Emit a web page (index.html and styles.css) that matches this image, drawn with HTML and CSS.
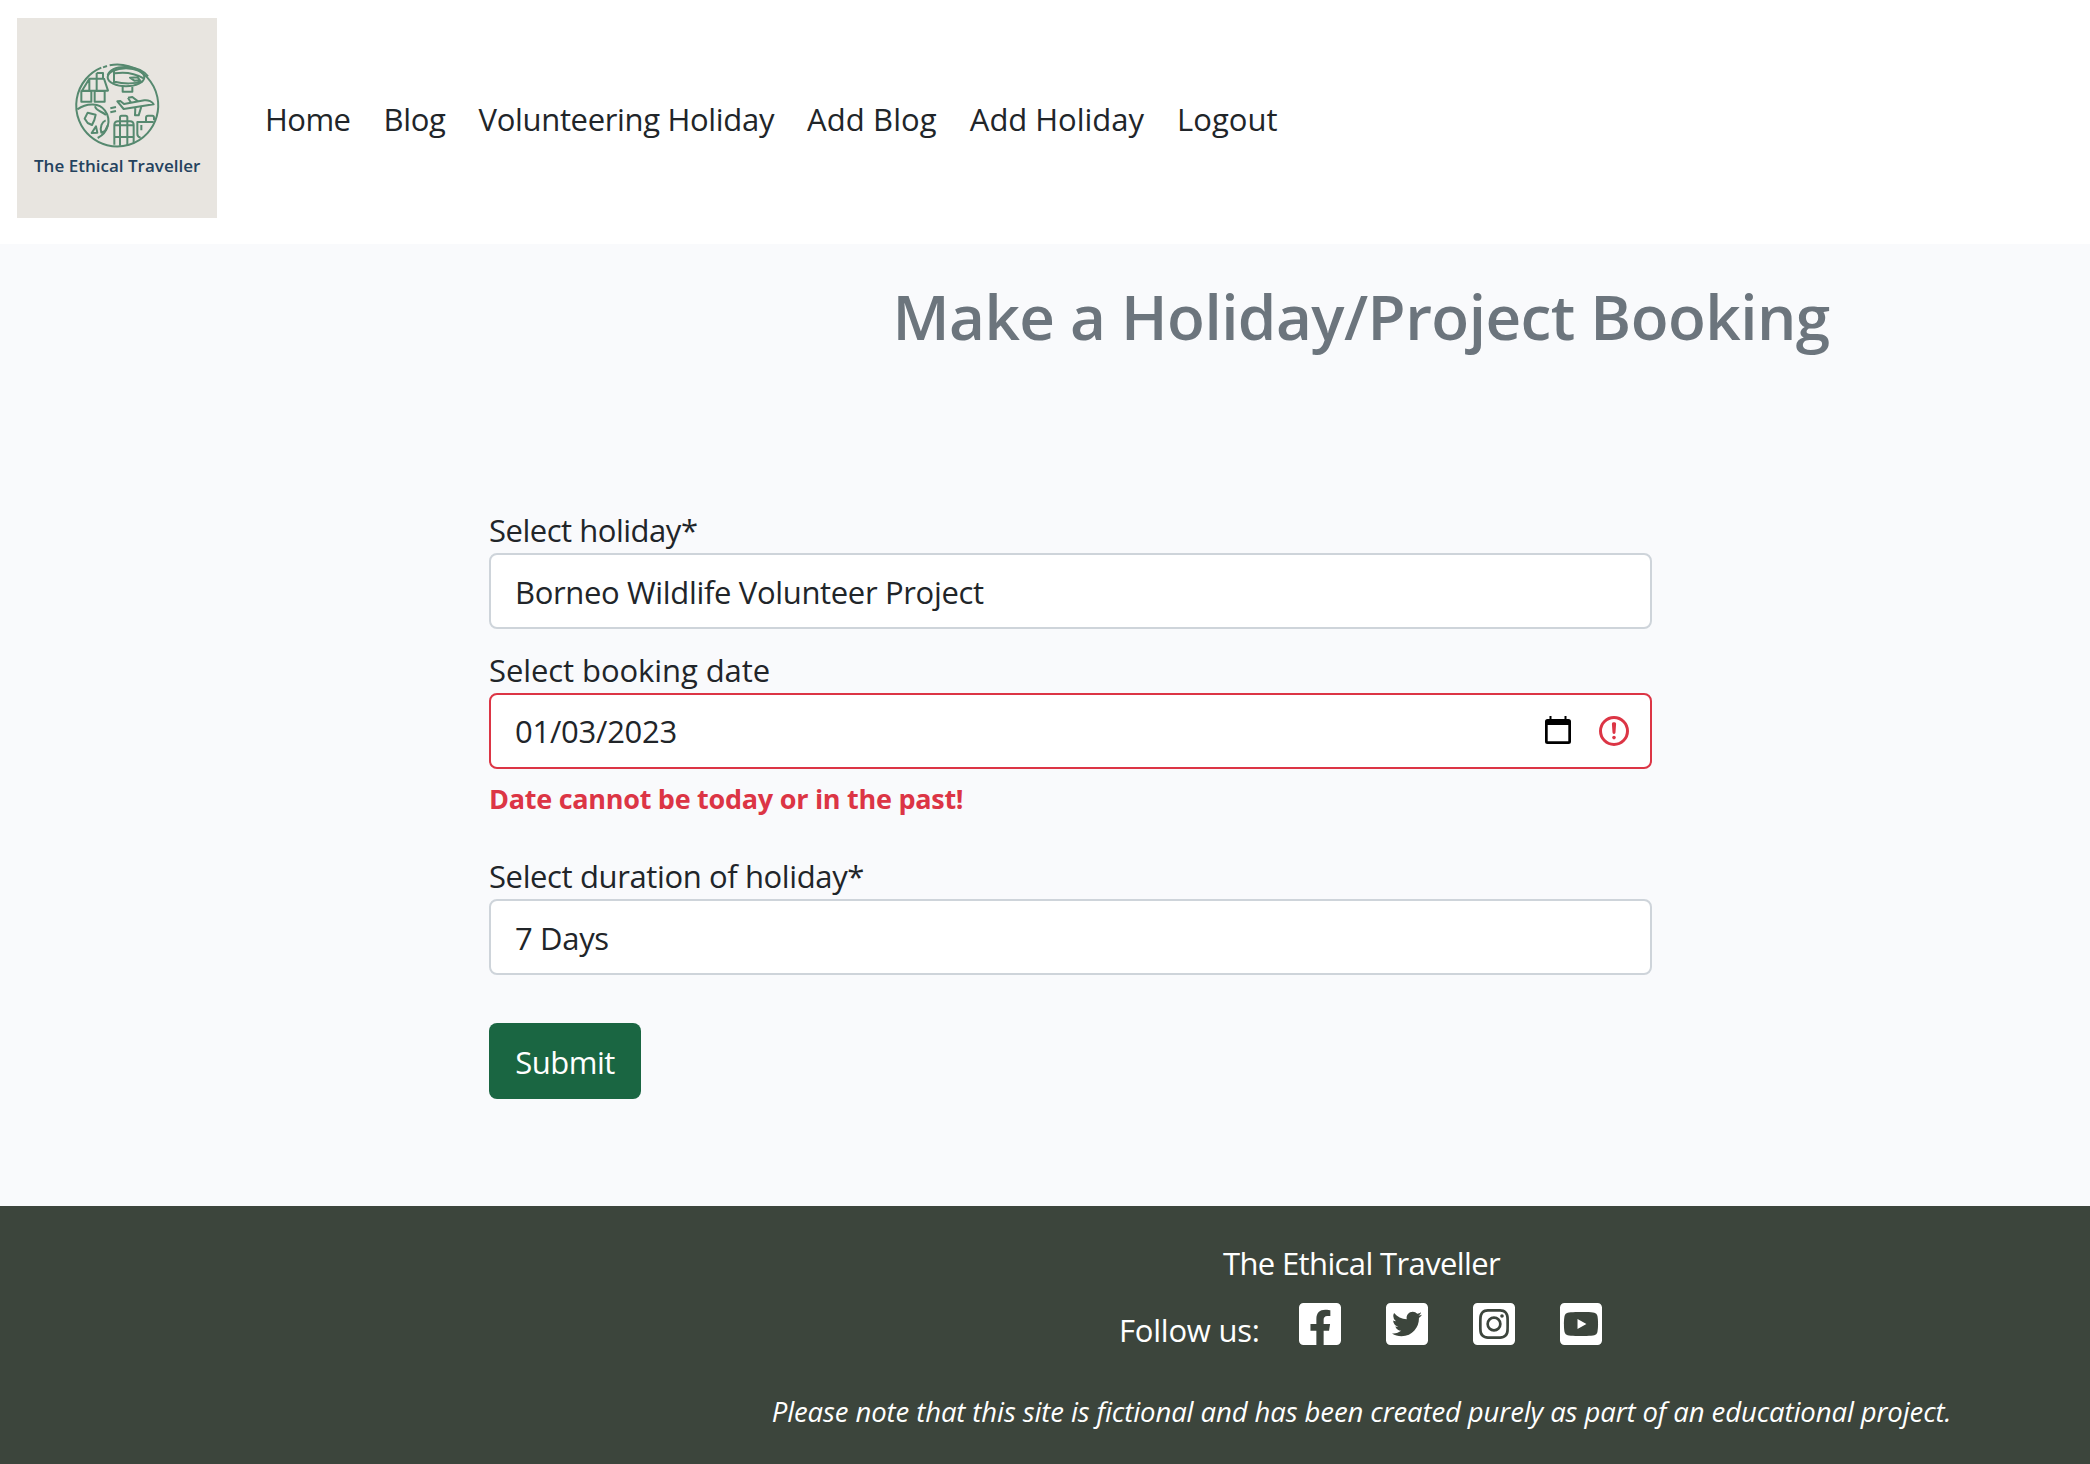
FILE: index.html
```html
<!DOCTYPE html>
<html lang="en">
<head>
<meta charset="utf-8">
<title>The Ethical Traveller</title>
<link rel="stylesheet" href="styles.css">
</head>
<body>
<header class="navbar">
  <a class="brand" href="#">
    <svg class="logo" viewBox="51 54 600 600" role="img" aria-label="The Ethical Traveller">
      <rect x="51" y="54" width="600" height="600" fill="#e8e5e0"/>
      <g fill="none" stroke="#56896f" stroke-width="6" stroke-linejoin="round">
        <path d="M329 195.500A123 123 0 1 1 304 203M309 202L321 198"/>
        <path d="M246 272L268 236H312L324 272ZM268 236V272M290 219V272M290 219H309V236M244 273H274V305H244ZM284 273H314V305H284Z"/>
        <ellipse cx="378" cy="232" rx="55" ry="27"/>
        <path d="M323 225C330 207 352 199 385 201C410 202 433 214 444 229M342 211V249M344 220C375 215 405 220 431 235M344 245C370 252 405 252 428 244M390 233L413 232L420 241L403 242ZM368 260V275H397V260"/>
        <path d="M232 328C262 307 299 309 315 332C335 360 325 398 293 414"/>
        <path d="M263 338L287 344L283 360L276 375L263 369L254 356ZM285 319C289 334 303 332 318 345M288 379L292 398L275 399ZM317 361C306 365 299 381 304 398L315 393L323 376"/>
        <path d="M331 325L348 321M331 337L348 333"/>
        <path d="M352 304L361 303L372 312L433 301C445 299 458 306 461 313L371 327ZM384 293L397 291L414 304M384 293L393 308M406 323L405 346H416L424 320"/>
        <path d="M343 434V375Q343 364 354 364H390Q401 364 401 375V430M360 437V352Q360 347 365 347H377Q382 347 382 352V437M343 376H401M343 411H401"/>
        <path d="M422 413Q412 411 412 402V366H461M438 366V353Q438 347 444 347H457Q462 347 462 353V361M424 375V391"/>
      </g>
      <text class="logo-text" x="102" y="516" textLength="499" lengthAdjust="spacingAndGlyphs">The Ethical Traveller</text>
    </svg>
  </a>
  <nav class="nav">
    <a class="nav-link t-home" href="#">Home</a>
    <a class="nav-link t-blog" href="#">Blog</a>
    <a class="nav-link t-volunteering" href="#">Volunteering Holiday</a>
    <a class="nav-link t-add" href="#">Add Blog</a>
    <a class="nav-link t-add-holiday" href="#">Add Holiday</a>
    <a class="nav-link t-logout" href="#">Logout</a>
  </nav>
</header>

<main class="main">
  <h1 class="title">Make a Holiday/Project Booking</h1>
  <form class="form">
    <label class="label t-holiday" for="holiday">Select holiday*</label>
    <select class="control" id="holiday"><option>Borneo Wildlife Volunteer Project</option></select>

    <label class="label t-date" for="date">Select booking date</label>
    <div class="control control-invalid">
      <input class="date-input" id="date" type="text" value="01/03/2023">
      <svg class="calendar-icon" viewBox="0 0 26 28"><path fill="#000" fill-rule="evenodd" d="M4.500 0H6.500V3H19.500V0H21.500V3H23.500A2.500 2.500 0 0 1 26 5.500V25.500A2.500 2.500 0 0 1 23.500 28H2.500A2.500 2.500 0 0 1 0 25.500V5.500A2.500 2.500 0 0 1 2.500 3H4.500ZM2.700 9V25.300H23.300V9Z"/></svg>
      <svg class="error-icon" viewBox="0 0 12 12" fill="none" stroke="#dc3545"><circle cx="6" cy="6" r="4.500"/><path stroke-linejoin="round" d="M5.800 3.600h.4L6 6.500z"/><circle cx="6" cy="8.200" r=".6" fill="#dc3545" stroke="none"/></svg>
    </div>
    <p class="error">Date cannot be today or in the past!</p>

    <label class="label t-duration" for="duration">Select duration of holiday*</label>
    <select class="control" id="duration"><option>7 Days</option></select>

    <button class="submit" type="button">Submit</button>
  </form>
</main>

<footer class="footer">
  <p class="footer-name">The Ethical Traveller</p>
  <div class="follow">
    <span class="follow-text">Follow us:</span>
    <a class="social" href="#" aria-label="Facebook"><svg viewBox="0 32 448 448"><path d="M400 32H48A48 48 0 0 0 0 80v352a48 48 0 0 0 48 48h137.250V327.690h-63V256h63v-54.640c0-62.150 37-96.480 93.670-96.480 27.140 0 55.520 4.840 55.520 4.840v61h-31.270c-30.810 0-40.420 19.120-40.420 38.730V256h68.780l-11 71.690h-57.780V480H400a48 48 0 0 0 48-48V80a48 48 0 0 0-48-48z"/></svg></a>
    <a class="social" href="#" aria-label="Twitter"><svg viewBox="0 32 448 448"><path d="M400 32H48C21.500 32 0 53.500 0 80v352c0 26.500 21.500 48 48 48h352c26.500 0 48-21.500 48-48V80c0-26.500-21.500-48-48-48zm-48.900 158.800c.2 2.800.2 5.700.2 8.500 0 86.700-66 186.600-186.600 186.600-37.200 0-71.700-10.800-100.700-29.400 5.300.6 10.400.8 15.800.8 30.700 0 58.900-10.400 81.400-28-28.800-.6-53-19.500-61.300-45.500 10.100 1.500 19.200 1.500 29.600-1.200-30-6.100-52.500-32.500-52.500-64.400v-.8c8.700 4.900 18.900 7.900 29.600 8.300a65.447 65.447 0 0 1-29.200-54.600c0-12.200 3.200-23.400 8.900-33.100 32.300 39.800 80.800 65.800 135.200 68.600-9.300-44.500 24-80.600 64-80.600 18.900 0 35.900 7.900 47.900 20.700 14.800-2.800 29-8.300 41.600-15.800-4.900 15.200-15.200 28-28.800 36.100 13.200-1.400 26-5.100 37.800-10.200-8.900 13.100-20.100 24.700-32.900 34z"/></svg></a>
    <a class="social" href="#" aria-label="Instagram"><svg viewBox="0 32 448 448"><path d="M224,202.660A53.340,53.340,0,1,0,277.360,256,53.380,53.380,0,0,0,224,202.660Zm124.710-41a54,54,0,0,0-30.410-30.410c-21-8.290-71-6.430-94.300-6.430s-73.250-1.930-94.310,6.430a54,54,0,0,0-30.410,30.410c-8.280,21-6.430,71.050-6.430,94.330S91,329.260,99.320,350.330a54,54,0,0,0,30.410,30.410c21,8.290,71,6.430,94.310,6.430s73.240,1.930,94.300-6.430a54,54,0,0,0,30.410-30.410c8.350-21,6.430-71.050,6.430-94.330S357.100,182.740,348.750,161.670ZM224,338a82,82,0,1,1,82-82A81.900,81.900,0,0,1,224,338Zm85.380-148.300a19.140,19.140,0,1,1,19.130-19.140A19.100,19.100,0,0,1,309.420,189.740ZM400,32H48A48,48,0,0,0,0,80V432a48,48,0,0,0,48,48H400a48,48,0,0,0,48-48V80A48,48,0,0,0,400,32ZM382.880,322c-1.290,25.630-7.140,48.340-25.850,67s-41.400,24.630-67,25.850c-26.410,1.490-105.590,1.490-132,0-25.630-1.290-48.260-7.150-67-25.850s-24.630-41.420-25.850-67c-1.490-26.420-1.490-105.610,0-132,1.290-25.630,7.070-48.340,25.850-67s41.470-24.560,67-25.780c26.410-1.490,105.590-1.490,132,0,25.630,1.290,48.330,7.150,67,25.850s24.630,41.420,25.850,67.050C384.370,216.440,384.370,295.560,382.880,322Z"/></svg></a>
    <a class="social" href="#" aria-label="YouTube"><svg viewBox="0 32 448 448"><path d="M186.800 202.100l95.200 54.100-95.200 54.100V202.100zM448 80v352c0 26.500-21.500 48-48 48H48c-26.500 0-48-21.500-48-48V80c0-26.500 21.500-48 48-48h352c26.500 0 48 21.500 48 48zm-42 176.300s0-59.600-7.600-88.200c-4.200-15.800-16.500-28.200-32.200-32.400C337.900 128 224 128 224 128s-113.900 0-142.200 7.700c-15.700 4.200-28 16.600-32.200 32.400-7.600 28.500-7.600 88.200-7.600 88.200s0 59.600 7.600 88.200c4.200 15.800 16.500 27.700 32.200 31.900C110.100 384 224 384 224 384s113.900 0 142.200-7.700c15.700-4.200 28-16.100 32.200-31.900 7.600-28.500 7.600-88.100 7.600-88.100z"/></svg></a>
  </div>
  <p class="note">Please note that this site is fictional and has been created purely as part of an educational project.</p>
</footer>
</body>
</html>
```
FILE: styles.css
```css
* { box-sizing: border-box; }

body {
  margin: 0;
  min-height: 1464px;
  display: flex;
  flex-direction: column;
  background: #f9fafc;
  color: #212529;
  font: 31px/48px "Open Sans", "Noto Sans", sans-serif;
}

p, h1 { margin: 0; }
a { color: inherit; text-decoration: none; }
svg { display: block; }

/* Header */
.navbar {
  display: flex;
  align-items: flex-start;
  height: 244px;
  padding: 18px 17px;
  background: #fff;
}
.logo { width: 200px; height: 200px; }
.logo-text {
  font: 600 48px "Open Sans", sans-serif;
  fill: #24425e;
}
.nav {
  display: flex;
  gap: 33px;
  margin: 77px 0 0 48px;
  white-space: nowrap;
}
.t-home { letter-spacing: -.55px; }
.t-blog { letter-spacing: -.3px; }
.t-volunteering { letter-spacing: -.33px; }
.t-add { letter-spacing: .1px; }
.t-add-holiday { letter-spacing: -.03px; }
.t-logout { letter-spacing: .05px; }

/* Booking form */
.main { height: 962px; }
.title {
  padding: 34px 1px 0 633px;
  height: 261px;
  text-align: center;
  font-size: 62px;
  line-height: 76px;
  font-weight: 600;
  letter-spacing: -.55px;
  color: #6c757d;
}
.form {
  display: flex;
  flex-direction: column;
  width: 1163px;
  margin-left: 489px;
}
.label { height: 48px; padding-top: 1px; }
.t-holiday { letter-spacing: -.48px; }
.t-date { letter-spacing: -.08px; }
.t-duration { letter-spacing: -.38px; }
.control {
  display: flex;
  align-items: center;
  width: 100%;
  height: 76px;
  margin: 0 0 16px;
  padding: 1px 20px 0 24px;
  border: 2px solid #ced4da;
  border-radius: 8px;
  background: #fff;
  color: #212529;
  font: inherit;
  letter-spacing: -.34px;
  appearance: none;
}
.control-invalid { border-color: #dc3545; margin-bottom: 8px; padding-top: 0; }
.date-input {
  flex: 1;
  padding: 0;
  border: 0;
  outline: 0;
  background: none;
  color: inherit;
  font: inherit;
  letter-spacing: -.25px;
}
.calendar-icon { width: 26px; height: 28px; margin: 0 25px 2px 0; }
.error-icon { width: 36px; height: 36px; margin-right: -2px; }
.error {
  height: 74px;
  font-size: 27px;
  line-height: 44px;
  font-weight: 700;
  letter-spacing: -.27px;
  color: #dc3545;
}
.submit {
  width: 152px;
  height: 76px;
  margin-top: 32px;
  padding: 1px 0 0;
  border: 0;
  border-radius: 8px;
  background: #1a6642;
  color: #fff;
  font: inherit;
  letter-spacing: -.48px;
}

/* Footer */
.footer {
  height: 258px;
  padding: 33px 0 0 633px;
  background: #3c453c;
  color: #fff;
  text-align: center;
}
.footer-name { letter-spacing: -.63px; }
.follow {
  display: flex;
  gap: 45px;
  margin: 16px 0 0 486px;
}
.follow-text { padding-top: 3px; margin-right: -6px; letter-spacing: -.23px; }
.social svg { width: 42px; height: 42px; fill: #fff; }
.note {
  margin-top: 36px;
  font-size: 27.500px;
  line-height: 44px;
  font-style: italic;
  letter-spacing: -.1px;
}
```
